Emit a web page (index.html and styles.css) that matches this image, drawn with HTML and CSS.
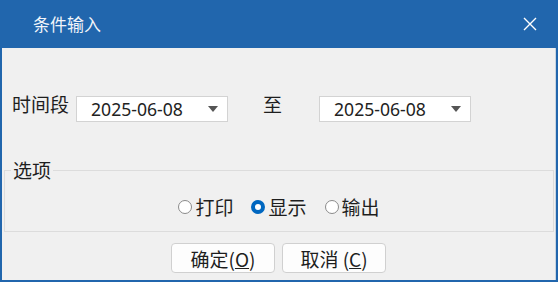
FILE: index.html
```html
<!DOCTYPE html>
<html lang="zh-CN">
<head>
    <meta charset="UTF-8">
    <title>条件输入</title>
    <link rel="stylesheet" href="styles.css">
</head>
<body>
    <div class="window">
        <header class="titlebar">
            <span class="title">条件输入</span>
            <svg class="close" width="14" height="14" viewBox="0 0 14 14">
                <path d="M1 1 L13 13 M13 1 L1 13" stroke="#ffffff" stroke-width="1.4" fill="none"/>
            </svg>
        </header>

        <div class="content">
            <div class="range-row">
                <span class="label">时间段</span>
                <div class="date-box">
                    <span>2025-06-08</span>
                    <span class="arrow"></span>
                </div>
                <span class="to">至</span>
                <div class="date-box">
                    <span>2025-06-08</span>
                    <span class="arrow"></span>
                </div>
            </div>

            <fieldset class="options">
                <legend>选项</legend>
                <div class="radio-row">
                    <label class="radio"><input type="radio" name="mode">打印</label>
                    <label class="radio"><input type="radio" name="mode" checked>显示</label>
                    <label class="radio"><input type="radio" name="mode">输出</label>
                </div>
            </fieldset>

            <div class="buttons">
                <button type="button">确定(<u>O</u>)</button>
                <button type="button">取消 (<u>C</u>)</button>
            </div>
        </div>
    </div>
</body>
</html>
```

FILE: styles.css
```css
body {
    margin: 0;
    font-family: "Noto Sans CJK SC", "Noto Sans", sans-serif;
    font-size: 19px;
    line-height: 24px;
    color: #1e1e1e;
}

/* Window frame */
.window {
    width: 558px;
    height: 282px;
    box-sizing: border-box;
    background-color: #f0f0f0;
    border: 2px solid #2166ad;
    border-top: none;
    display: flex;
    flex-direction: column;
}

.titlebar {
    height: 48px;
    margin: 0 -2px;
    background-color: #2166ad;
    display: flex;
    align-items: center;
    justify-content: space-between;
    padding: 0 21px 0 33px;
    flex-shrink: 0;
}

.title {
    color: #f2f5fa;
    font-size: 17px;
}

.close {
    display: block;
}

.content {
    border-right: 1px solid #c8d4e0;
    flex: 1;
}

/* Date range */
.range-row {
    display: flex;
    align-items: flex-start;
    margin-top: 48px;
    padding-left: 10px;
}

.label {
    width: 64px;
    margin-top: -4px;
}

.to {
    margin: -4px 37px 0 35px;
}

.date-box {
    width: 152px;
    height: 26px;
    box-sizing: border-box;
    background-color: #ffffff;
    border: 1px solid #d3d3d3;
    display: flex;
    align-items: center;
    justify-content: space-between;
    padding: 0 9px 0 14px;
    font-family: "Noto Sans", sans-serif;
    font-size: 17.6px;
    color: #222;
}

.arrow {
    width: 0;
    height: 0;
    border-left: 5px solid transparent;
    border-right: 5px solid transparent;
    border-top: 6px solid #555;
}

/* Options group */
.options {
    margin: 36px 1px 0 2px;
    padding: 13px 6px 12px 6px;
    border: 1px solid #dcdcdc;
}

.options legend {
    padding: 0 2px;
}

.radio-row {
    display: flex;
    justify-content: center;
    gap: 18px;
}

.radio {
    display: flex;
    align-items: center;
}

.radio input {
    appearance: none;
    flex-shrink: 0;
    width: 14px;
    height: 14px;
    margin: 0 3px 0 0;
    border: 1px solid #8a8a8a;
    border-radius: 50%;
    background-color: #fff;
    box-sizing: border-box;
}

.radio input:checked {
    border: 4px solid #0067c0;
}

/* Buttons */
.buttons {
    display: flex;
    justify-content: center;
    gap: 7px;
    margin-top: 11px;
}

.buttons button {
    width: 104px;
    height: 30px;
    background-color: #fdfdfd;
    border: 1px solid #d0d0d0;
    border-radius: 4px;
    font-family: inherit;
    font-size: 19px;
    color: #1e1e1e;
    padding: 0;
}
```
